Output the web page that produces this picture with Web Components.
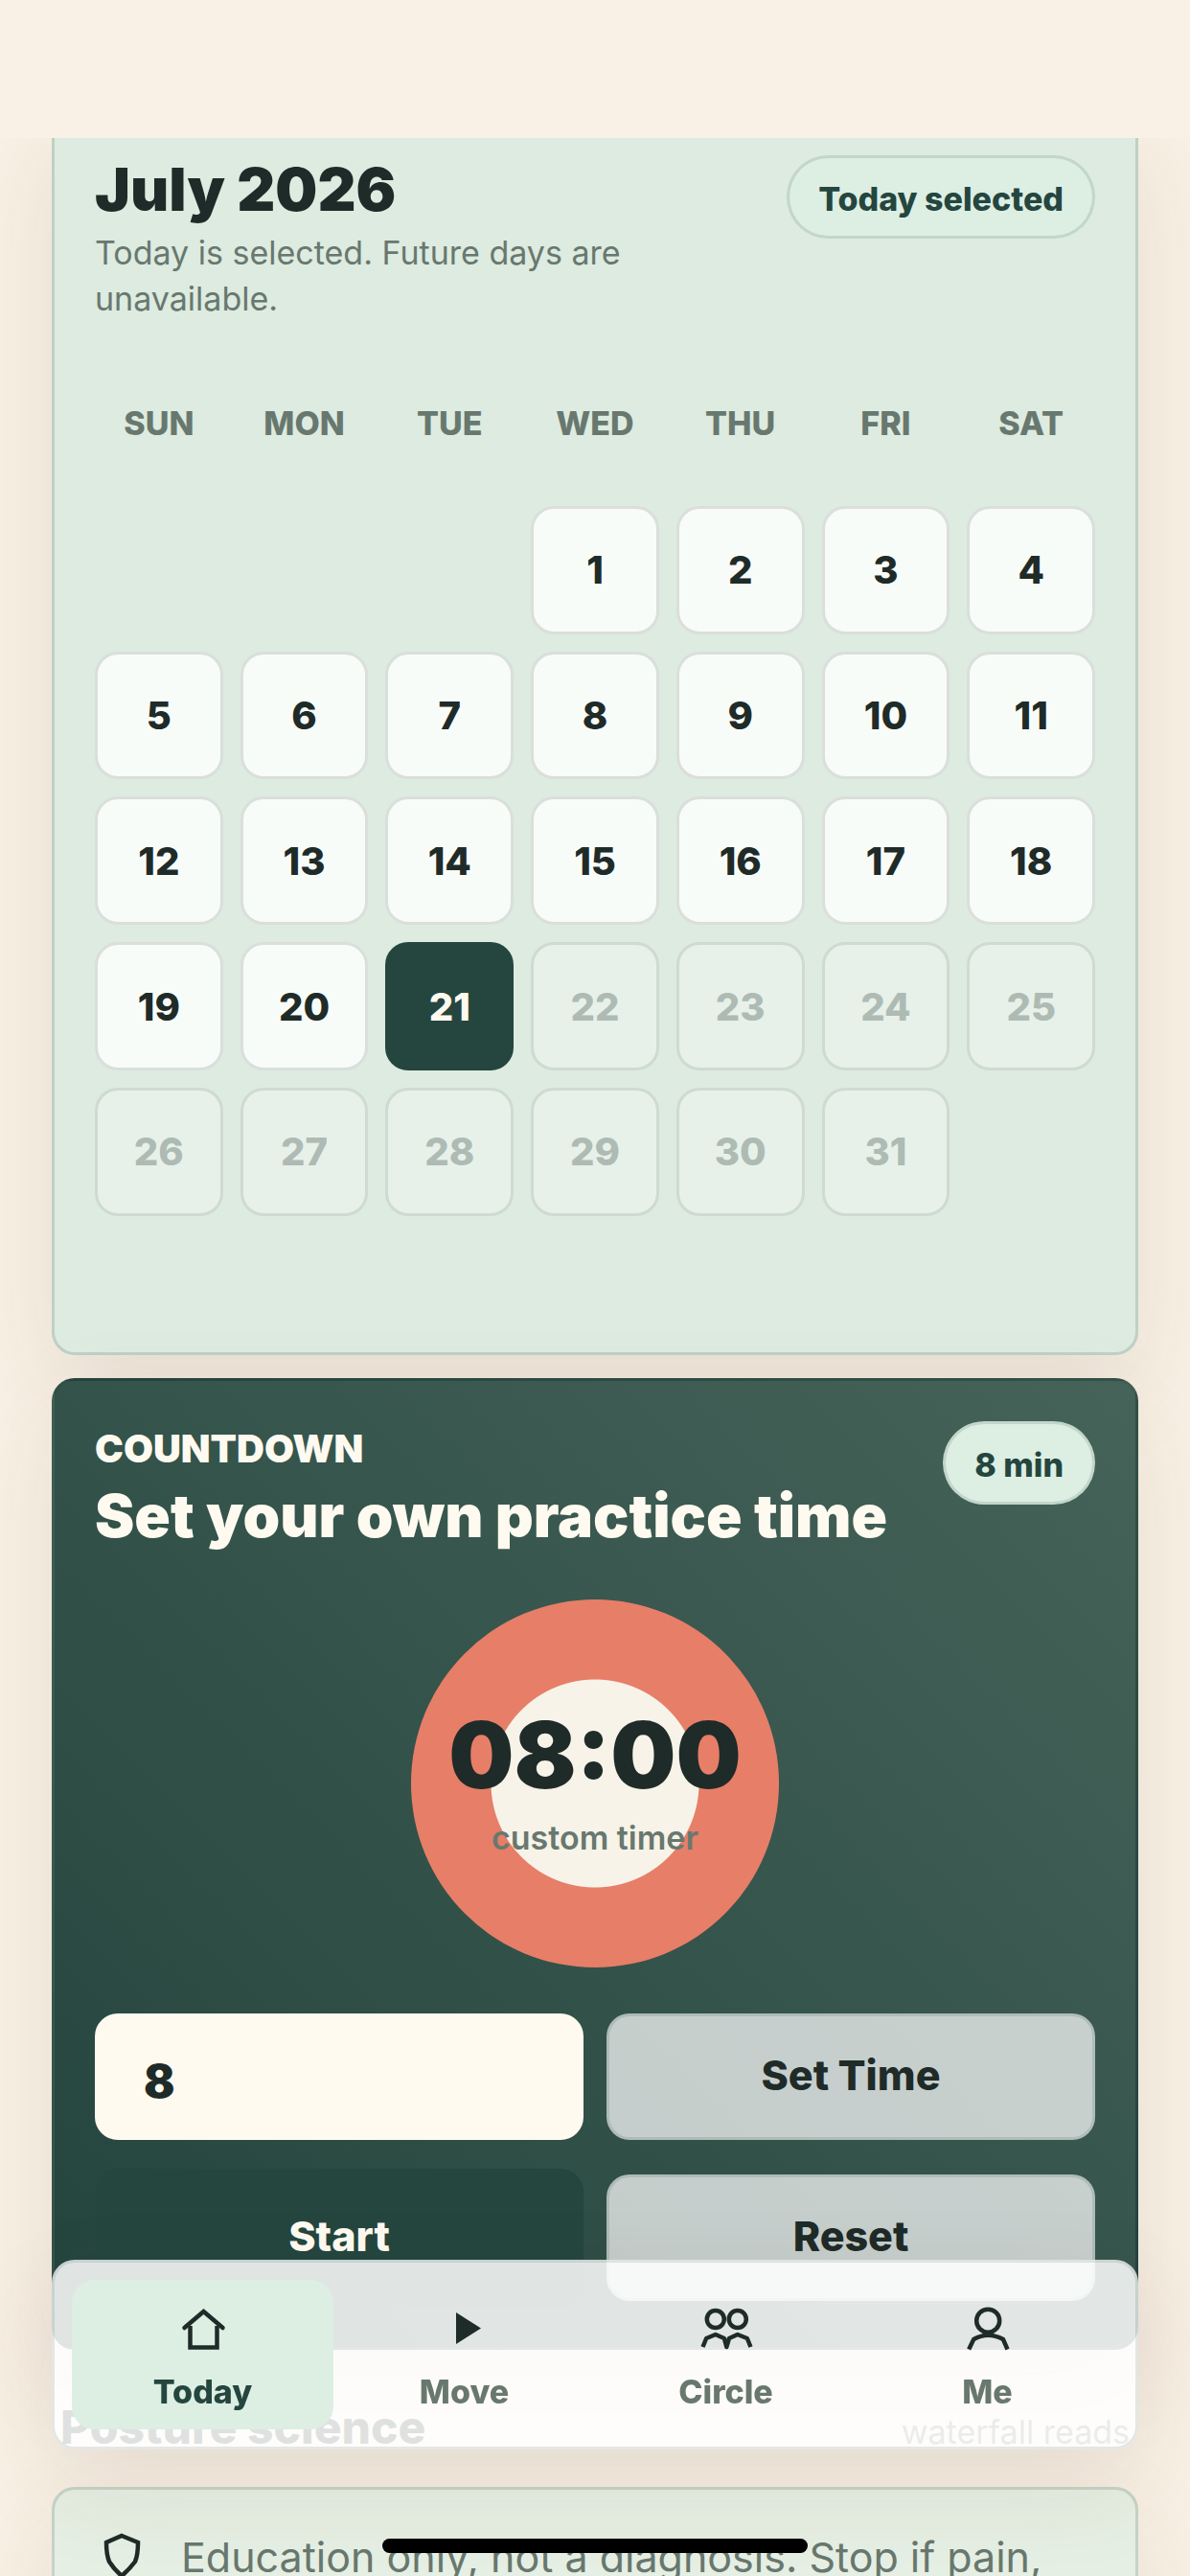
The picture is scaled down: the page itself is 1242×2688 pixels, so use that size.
<!DOCTYPE html>
<html lang="en">
<head>
<meta charset="utf-8">
<meta name="viewport" content="width=device-width, initial-scale=1">
<title>Today</title>
<style>
:root {
  --ink: #1f2b28;
  --muted: #68786f;
  --forest: #24463f;
  --mint: #ddeee3;
  --cream: #f9f1e5;
  --ivory: #fffaf0;
  --line: rgba(36, 70, 63, .14);
  --fs-s: 34px;
  --fs-m: 40px;
  --fs-l: 43px;
  --fs-h: 48px;
  --fs-xl: 62px;
}
html, body { margin: 0; }
body {
  background: var(--cream);
  color: var(--ink);
  font-family: Inter, "Liberation Sans", sans-serif;
}
</style>
</head>
<body>
<practice-app></practice-app>

<script>
const define = (name, html, setup) => {
  const template = document.createElement('template');
  template.innerHTML = '<style>*{box-sizing:border-box}</style>' + html;
  customElements.define(name, class extends HTMLElement {
    constructor() {
      super();
      this.attachShadow({ mode: 'open' }).append(template.content.cloneNode(true));
    }
    connectedCallback() { if (setup) setup(this, this.shadowRoot); }
  });
};

define('soft-pill', `
<style>
:host { display: block; flex: none; box-sizing: border-box; padding: 20px 30px 16px; border: 3px solid var(--line); border-radius: 99px;
  background: var(--mint); color: var(--forest); font-size: var(--fs-s); font-weight: 800; line-height: 45px; white-space: nowrap; }
</style>
<slot></slot>`);

define('surface-card', `
<style>
:host { display: block; box-sizing: border-box; padding: 42px; border: 3px solid rgba(36, 70, 63, .16); border-radius: 24px;
  background: #ddebe0; box-shadow: 0 36px 100px rgba(76, 52, 40, .1); }
:host([tone="forest"]) { background: linear-gradient(45deg, #23443d, #466359); color: var(--ivory); }
:host([tone="note"]) { background: #e6efe3; }
</style>
<slot></slot>`);

define('card-header', `
<style>
:host { display: flex; justify-content: space-between; align-items: flex-start; gap: 24px; }
.copy { flex: 1; min-width: 0; }
h2 { margin: 0; font-size: var(--fs-xl); line-height: 72px; font-weight: 900; }
::slotted([slot="eyebrow"]) { display: block; margin-bottom: 6px; font-size: var(--fs-m); line-height: 57px; font-weight: 900; }
::slotted([slot="note"]) { display: block; max-width: 640px; margin-top: 6px; font-size: var(--fs-s); line-height: 48px; color: var(--muted); }
</style>
<div class="copy"><slot name="eyebrow"></slot><h2><slot></slot></h2><slot name="note"></slot></div>
<slot name="pill"></slot>`);

define('month-calendar', `
<style>
:host { display: block; padding: 82px 0 100px; }
.week, .days { display: grid; grid-template-columns: repeat(7, 1fr); gap: 18px; }
.week { margin-bottom: 62px; color: var(--muted); font-size: var(--fs-s); font-weight: 800; line-height: 48px; text-align: center; }
button { aspect-ratio: 1; padding: 0; border: 3px solid #dadfdb; border-radius: 24px; background: #f8fcf9;
  color: var(--ink); font: inherit; font-size: var(--fs-m); font-weight: 800; }
button:first-child { grid-column-start: 4; }
button[aria-pressed="true"] { border-color: var(--forest); background: var(--forest); color: var(--ivory); }
button:disabled { background: #e7f1e9; border-color: #cfdad2; color: #aebbb4; }
</style>
<div class="week"></div>
<div class="days"></div>`, (host, root) => {
  root.querySelector('.week').innerHTML = ['SUN', 'MON', 'TUE', 'WED', 'THU', 'FRI', 'SAT'].map(d => `<span>${d}</span>`).join('');
  const today = Number(host.getAttribute('today'));
  root.querySelector('.days').innerHTML = Array.from({ length: 31 }, (_, i) => i + 1)
    .map(d => `<button type="button" aria-pressed="${d === today}"${d > today ? ' disabled' : ''}>${d}</button>`).join('');
});

define('timer-dial', `
<style>
:host { display: grid; place-content: center; justify-items: center; width: 384px; height: 384px; margin: 51px auto 42px; padding-top: 3px; border-radius: 50%;
  box-sizing: border-box; background: radial-gradient(circle, #f7f3e8 108px, #e77e68 109px); color: var(--ink); white-space: nowrap; }
strong { font-size: 96px; line-height: 96px; font-weight: 900; }
span { margin-top: 15px; color: var(--muted); font-size: var(--fs-s); line-height: 48px; font-weight: 600; }
</style>
<strong>08:00</strong><span>custom timer</span>`);

define('timer-controls', `
<style>
:host { display: grid; grid-template-columns: 1fr 1fr; grid-auto-rows: 144px; align-items: center; gap: 24px; }
input, button { width: 100%; height: 132px; border-radius: 24px; font: inherit; color: var(--ink); }
input { padding: 9px 48px 0; border: 3px solid var(--ivory); background: var(--ivory); font-size: var(--fs-h); font-weight: 900; }
button { padding: 0 0 3px; border: 3px solid rgba(36, 70, 63, .14); background: rgba(255, 255, 255, .72); font-size: var(--fs-l); font-weight: 800; }
button.primary { height: 144px; border: 0; background: var(--forest); color: var(--ivory); }
</style>
<input type="text" inputmode="numeric" aria-label="Minutes" value="8">
<button type="button">Set Time</button>
<button type="button" class="primary">Start</button>
<button type="button">Reset</button>`);

define('section-heading', `
<style>
:host { display: flex; justify-content: space-between; align-items: baseline; padding: 51px 9px 27px; line-height: 60px; }
h2 { margin: 0; font-size: var(--fs-h); font-weight: 800; }
span { font-size: var(--fs-s); color: var(--muted); }
</style>
<h2><slot></slot></h2><span><slot name="aside"></slot></span>`);

define('safety-note', `
<style>
:host { display: flex; align-items: flex-start; gap: 36px; color: var(--muted); font-size: var(--fs-l); line-height: 57px; }
svg { flex: none; width: 54px; height: 54px; }
p { margin: 0; flex: 1; white-space: nowrap; }
</style>
<svg viewBox="0 0 54 54" fill="none" stroke="#1f2b28" stroke-width="4.5"><path d="M28 6 45 13Q45 26 42 33 36 41 28 48 20 41 15 33 12 26 12 13Z"/></svg>
<p><slot></slot></p>`);

define('tab-item', `
<style>
:host { display: block; flex: 1; }
a { display: flex; flex-direction: column; align-items: center; gap: 15px; height: 156px; padding-top: 24px; border-radius: 24px;
  color: var(--muted); font-size: var(--fs-s); line-height: 48px; font-weight: 800; text-decoration: none; }
:host([current]) a { background: var(--mint); color: var(--forest); }
::slotted(svg) { width: 54px; height: 54px; fill: none; stroke: var(--ink); stroke-width: 4.5; }
</style>
<a href="#"><slot name="icon"></slot><slot></slot></a>`);

define('tab-bar', `
<style>
:host { position: fixed; left: 54px; right: 54px; bottom: 132px; display: block; }
nav { display: flex; padding: 18px; border: 3px solid rgba(36, 70, 63, .12); border-radius: 24px; background: rgba(255, 255, 255, .86);
  box-shadow: 0 36px 100px rgba(76, 52, 40, .1); }
</style>
<nav aria-label="Main"><slot></slot></nav>`);

define('practice-app', `
<style>
:host { display: block; height: 100vh; overflow: hidden; }
.status { position: fixed; inset: 0 0 auto; height: 144px; background: var(--cream); }
main { display: flex; flex-direction: column; padding: 117px 54px 0; }
.timer { margin-top: 24px; }
.home { position: fixed; left: 50%; bottom: 24px; width: 444px; height: 15px; margin-left: -222px; border-radius: 9px; background: #000; }
</style>
<main>
  <surface-card>
    <card-header>July 2026
      <span slot="note">Today is selected. Future days are unavailable.</span>
      <soft-pill slot="pill">Today selected</soft-pill>
    </card-header>
    <month-calendar today="21"></month-calendar>
  </surface-card>
  <surface-card class="timer" tone="forest">
    <card-header><span slot="eyebrow">COUNTDOWN</span>Set your own practice time
      <soft-pill slot="pill">8 min</soft-pill>
    </card-header>
    <timer-dial></timer-dial>
    <timer-controls></timer-controls>
  </surface-card>
  <section-heading>Posture science<span slot="aside">waterfall reads</span></section-heading>
  <surface-card tone="note"><safety-note>Education only, not a diagnosis. Stop if pain,</safety-note></surface-card>
</main>
<div class="status"></div>
<tab-bar>
  <tab-item current><svg slot="icon" viewBox="0 0 54 54"><path d="M7.5 26 27.5 9 47.5 26" stroke-linecap="round"/><path d="M13.5 24V46.5H41.5V24"/></svg>Today</tab-item>
  <tab-item><svg slot="icon" viewBox="0 0 54 54"><path d="M18 10 44 26.5 18 43Z" fill="#1f2b28" stroke="none"/></svg>Move</tab-item>
  <tab-item><svg slot="icon" viewBox="0 0 54 54" overflow="visible"><circle cx="15.8" cy="17" r="9"/><circle cx="38.8" cy="17" r="9"/><path d="M2.5 46 6.2 37 15.8 33 24.8 37 27.3 46 30 37 38.8 33 48.8 37 52.5 46" stroke-linejoin="round"/></svg>Circle</tab-item>
  <tab-item><svg slot="icon" viewBox="0 0 54 54"><circle cx="27.2" cy="18.7" r="12"/><path d="M7.2 48.5 12.2 38Q27.2 29.5 43 38L47.5 48.5"/></svg>Me</tab-item>
</tab-bar>
<div class="home"></div>`);
</script>
</body>
</html>
